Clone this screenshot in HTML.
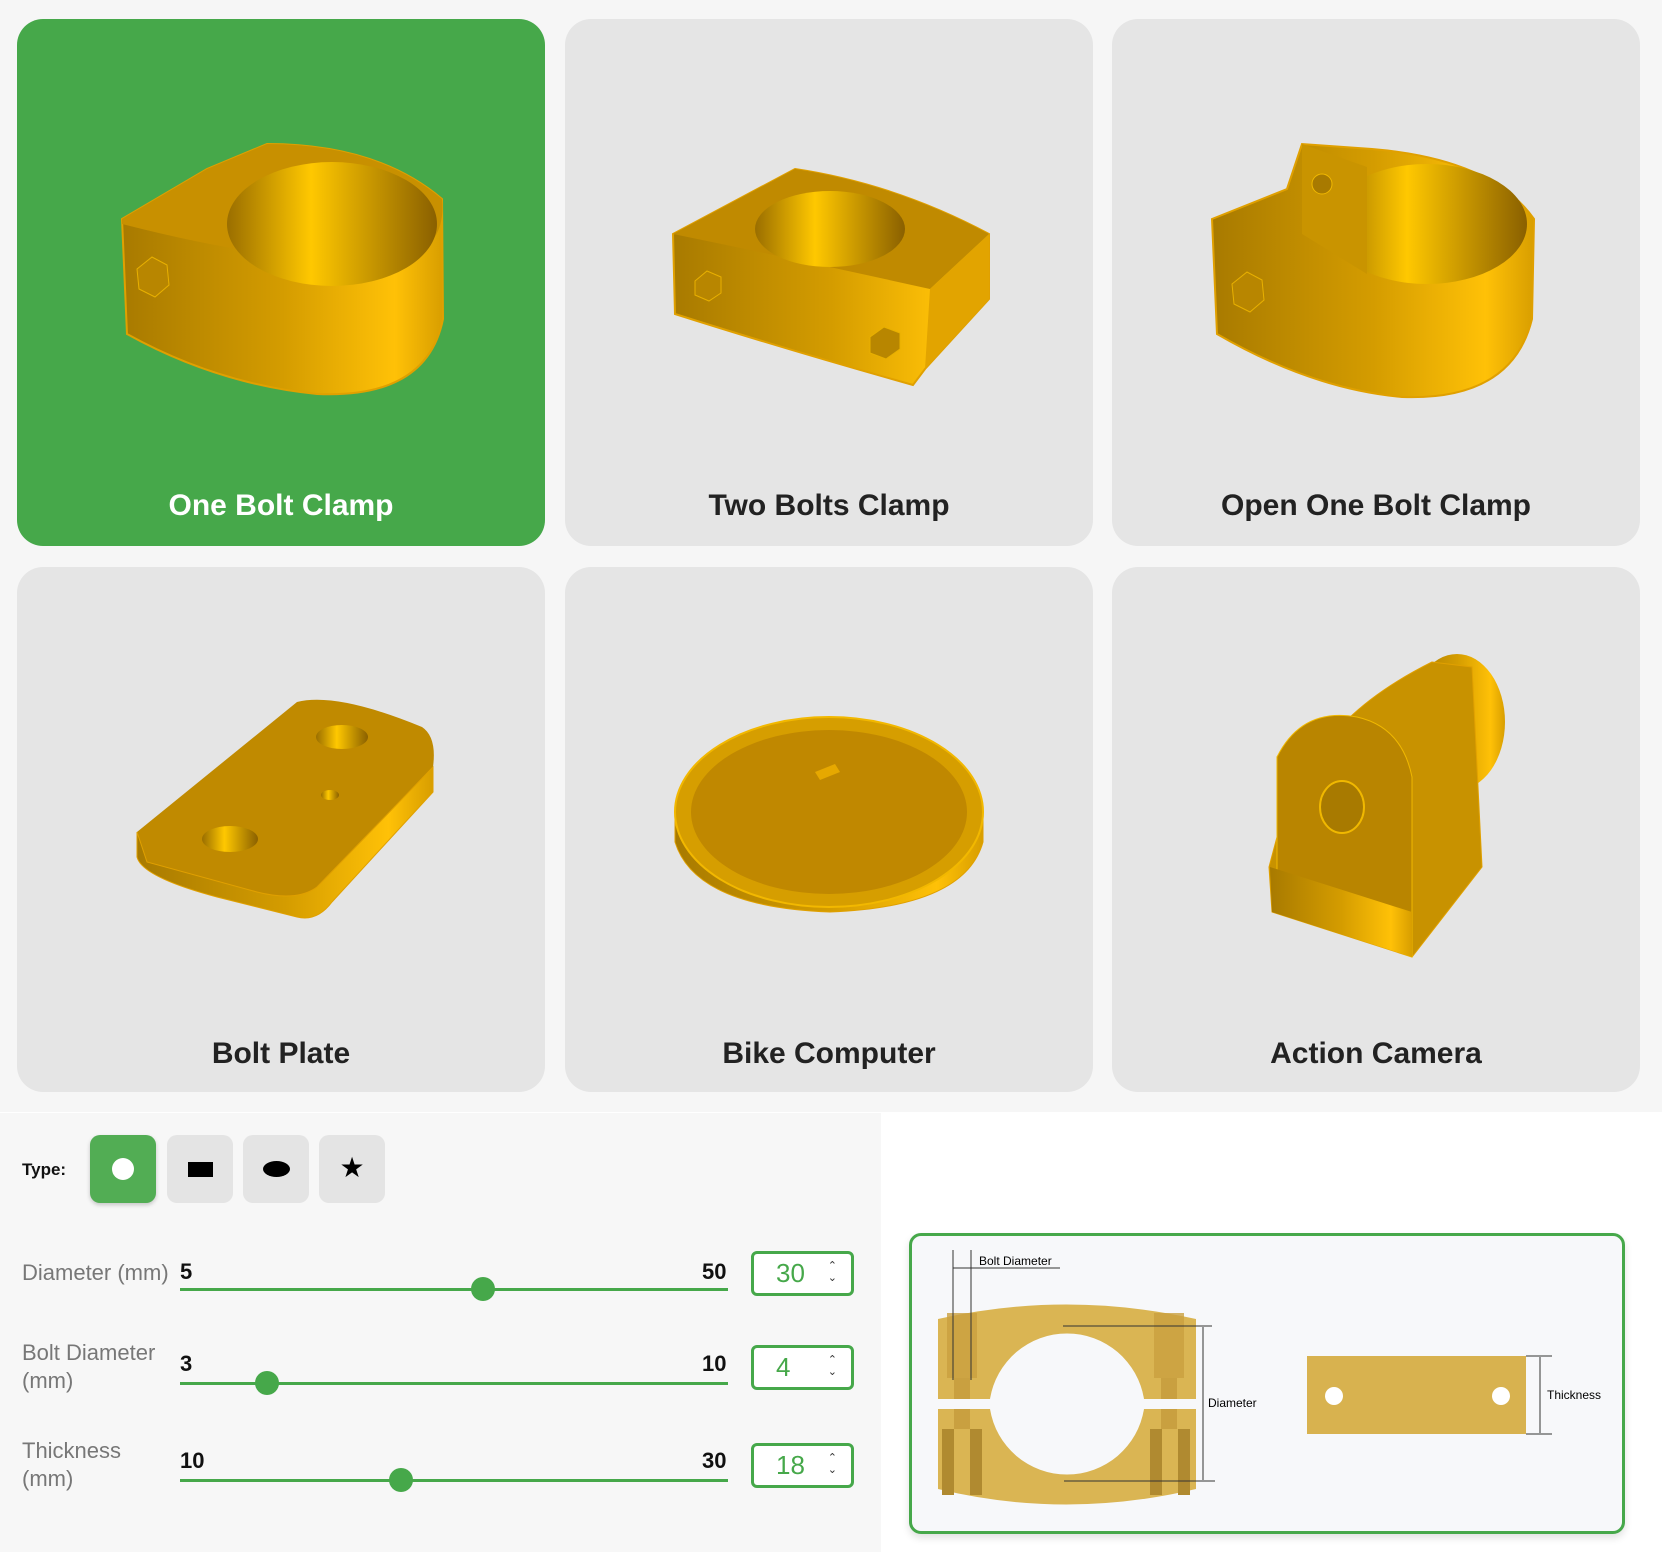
<!DOCTYPE html>
<html><head><meta charset="utf-8"><style>
*{margin:0;padding:0;box-sizing:border-box}
body{width:1662px;height:1552px;background:#fff;font-family:"Liberation Sans",sans-serif;position:relative;overflow:hidden}
.band{position:absolute;left:0;top:0;width:1662px;height:1112px;background:#f6f6f6}
.card{position:absolute;width:528px;background:#e5e5e5;border-radius:26px;overflow:hidden}
.card.sel{background:#46a84a}
.card svg{position:absolute;left:0;top:0}
.card .t{position:absolute;left:0;width:100%;text-align:center;font-weight:bold;font-size:30px;color:#222}
.card.sel .t{color:#fff}
.left{position:absolute;left:0;top:1113px;width:881px;height:439px;background:#f7f7f7}
.lbl{position:absolute;font-size:22px;color:#777;line-height:28px}
.b{position:absolute;font-weight:bold;font-size:22px;color:#111}
.btn{position:absolute;top:1135px;width:66px;height:68px;border-radius:10px;background:#e4e4e4}
.track{position:absolute;left:180px;width:548px;height:3px;background:#46a84a}
.thumb{position:absolute;width:24px;height:24px;border-radius:50%;background:#46a84a}
.num{position:absolute;left:751px;width:103px;height:45px;border:3px solid #46a84a;border-radius:6px;background:#fff;color:#46a84a;font-size:26px;line-height:39px;padding-left:22px}
.num span{position:absolute;right:14px;top:6px;font-size:11px;color:#333;line-height:12px;text-align:center;border-radius:4px}
.diag{position:absolute;left:909px;top:1233px;width:716px;height:301px;background:#f7f8fa;border:3px solid #46a84a;border-radius:12px;box-shadow:0 4px 8px rgba(0,0,0,.12)}
</style></head><body>
<div class="band"></div>
<svg width="0" height="0" style="position:absolute"><defs>
<linearGradient id="g" x1="0" x2="1"><stop offset="0" stop-color="#a87a00"/><stop offset=".5" stop-color="#d49c00"/><stop offset=".85" stop-color="#ffc107"/><stop offset="1" stop-color="#d89e00"/></linearGradient>
<linearGradient id="h" x1="0" x2="1"><stop offset="0" stop-color="#9a6e00"/><stop offset=".4" stop-color="#ffc800"/><stop offset="1" stop-color="#8a6000"/></linearGradient>
</defs></svg>

<div class="card sel" style="left:17px;top:19px;height:527px">
<svg width="528" height="527"><path d="M105 200 L190 150 L250 125 Q360 125 425 180 L426 300 Q410 380 300 375 Q200 365 110 315 Z" fill="url(#g)" stroke="#e0a000" stroke-width="2"/>
<path d="M105 200 L190 150 L250 125 Q360 125 425 180 Q430 230 380 240 Q280 250 105 205Z" fill="#c89000"/>
<ellipse cx="315" cy="205" rx="105" ry="62" fill="url(#h)"/>
<path d="M120 250 l15 -12 l15 8 l2 20 l-14 12 l-16 -8z" fill="#b88600" stroke="#e8b000"/></svg>
<div class="t" style="top:470px">One Bolt Clamp</div></div>

<div class="card" style="left:565px;top:19px;height:527px">
<svg width="528" height="527"><path d="M108 215 L230 150 Q330 165 424 215 L424 280 L360 350 L348 366 Q220 330 110 295Z" fill="url(#g)" stroke="#e0a000" stroke-width="2"/>
<path d="M108 215 L230 150 Q330 165 424 215 L365 270 Q230 240 108 215Z" fill="#c08a00"/>
<ellipse cx="265" cy="210" rx="75" ry="38" fill="url(#h)"/>
<path d="M365 270 L424 215 L424 280 L360 350Z" fill="#e2a400"/>
<path d="M130 262 l12 -10 l14 6 l0 16 l-12 8 l-14 -6z" fill="#b88600" stroke="#e8b000"/>
<path d="M305 318 l14 -10 l16 6 l0 16 l-14 10 l-16 -6z" fill="#b88600" stroke="#e8b000"/></svg>
<div class="t" style="top:470px">Two Bolts Clamp</div></div>

<div class="card" style="left:1112px;top:19px;height:527px">
<svg width="528" height="527"><path d="M100 200 L175 170 L190 125 L260 130 Q380 140 422 200 L420 300 Q400 382 290 378 Q200 370 105 315 Z" fill="url(#g)" stroke="#e0a000" stroke-width="2"/>
<ellipse cx="315" cy="205" rx="100" ry="60" fill="url(#h)"/>
<path d="M190 125 L255 148 L255 255 L190 215Z" fill="#c99400"/>
<circle cx="210" cy="165" r="10" fill="#a87a00" stroke="#f0b800"/>
<path d="M120 265 l15 -12 l15 8 l2 20 l-14 12 l-16 -8z" fill="#b88600" stroke="#e8b000"/></svg>
<div class="t" style="top:470px">Open One Bolt Clamp</div></div>

<div class="card" style="left:17px;top:567px;height:525px">
<svg width="528" height="525"><path d="M120 265 L280 135 Q320 125 405 160 Q420 170 416 200 L300 320 Q280 335 240 325 L130 295 Q118 285 120 265Z" fill="#c08a00"/>
<path d="M120 265 L120 290 Q125 310 200 330 L280 350 Q300 355 315 335 L416 225 L416 200 L300 320 Q280 335 240 325 L130 295Z" fill="url(#g)" stroke="#e0a000"/>
<ellipse cx="325" cy="170" rx="26" ry="12" fill="url(#h)"/><ellipse cx="213" cy="272" rx="28" ry="13" fill="url(#h)"/><ellipse cx="313" cy="228" rx="9" ry="5" fill="url(#h)"/></svg>
<div class="t" style="top:470px">Bolt Plate</div></div>

<div class="card" style="left:565px;top:567px;height:525px">
<svg width="528" height="525"><path d="M110 245 L110 275 Q130 340 265 345 Q400 340 418 275 L418 245Z" fill="url(#g)" stroke="#e0a000"/>
<ellipse cx="264" cy="245" rx="154" ry="95" fill="#d69e00" stroke="#f2b800" stroke-width="2"/>
<ellipse cx="264" cy="245" rx="138" ry="82" fill="#c08800"/>
<path d="M250 205 l20 -8 l5 8 l-20 8z" fill="#e6a800"/></svg>
<div class="t" style="top:470px">Bike Computer</div></div>

<div class="card" style="left:1112px;top:567px;height:525px">
<svg width="528" height="525"><ellipse cx="345" cy="155" rx="48" ry="68" fill="url(#g)"/>
<path d="M200 200 Q230 140 320 95 L360 100 L370 300 L300 390 L160 345 L157 300 L165 270 L165 190Z" fill="#c89200" stroke="#e0a000"/>
<path d="M165 190 Q190 140 245 150 Q290 160 300 210 L300 390 L165 340Z" fill="#b98500" stroke="#f0b800"/>
<path d="M158 300 L300 345 L300 390 L160 345Z" fill="url(#g)"/>
<ellipse cx="230" cy="240" rx="22" ry="26" fill="#a87a00" stroke="#f0b800" stroke-width="2"/></svg>
<div class="t" style="top:470px">Action Camera</div></div>

<div class="left"></div>
<div class="b" style="left:22px;top:1160px;font-size:17px">Type:</div>
<div class="btn" style="left:90px;background:#52ad54;box-shadow:0 2px 4px rgba(0,0,0,.2)"><div style="position:absolute;left:22px;top:23px;width:22px;height:22px;border-radius:50%;background:#fff"></div></div>
<div class="btn" style="left:167px"><div style="position:absolute;left:21px;top:27px;width:25px;height:15px;background:#000"></div></div>
<div class="btn" style="left:243px"><div style="position:absolute;left:20px;top:26px;width:27px;height:16px;border-radius:50%;background:#000"></div></div>
<div class="btn" style="left:319px"><div style="position:absolute;left:0;width:66px;top:18px;text-align:center;font-size:28px;line-height:30px">★</div></div>

<div class="lbl" style="left:22px;top:1259px">Diameter (mm)</div>
<div class="b" style="left:180px;top:1259px">5</div><div class="b" style="left:702px;top:1259px">50</div>
<div class="track" style="top:1288px"></div><div class="thumb" style="left:471px;top:1277px"></div>
<div class="num" style="top:1251px">30<span>⌃<br>⌄</span></div>

<div class="lbl" style="left:22px;top:1339px">Bolt Diameter<br>(mm)</div>
<div class="b" style="left:180px;top:1351px">3</div><div class="b" style="left:702px;top:1351px">10</div>
<div class="track" style="top:1382px"></div><div class="thumb" style="left:255px;top:1371px"></div>
<div class="num" style="top:1345px">4<span>⌃<br>⌄</span></div>

<div class="lbl" style="left:22px;top:1437px">Thickness<br>(mm)</div>
<div class="b" style="left:180px;top:1448px">10</div><div class="b" style="left:702px;top:1448px">30</div>
<div class="track" style="top:1479px"></div><div class="thumb" style="left:389px;top:1468px"></div>
<div class="num" style="top:1443px">18<span>⌃<br>⌄</span></div>

<div class="diag"><svg width="710" height="295" viewBox="912 1236 710 295" style="position:absolute;left:0;top:0">
<path d="M938 1319 Q1066 1290 1196 1319 L1196 1399 L1144 1399 A78 78 0 0 0 990 1399 L938 1399Z" fill="#dab553"/>
<path d="M938 1409 L990 1409 A78 78 0 0 0 1144 1409 L1196 1409 L1196 1489 Q1066 1520 938 1489Z" fill="#dab553"/>
<rect x="947" y="1313" width="30" height="65" fill="#c9a040" opacity=".8"/><rect x="1154" y="1313" width="30" height="65" fill="#c9a040" opacity=".8"/>
<rect x="954" y="1378" width="16" height="21" fill="#c9a040"/><rect x="1161" y="1378" width="16" height="21" fill="#c9a040"/>
<rect x="954" y="1409" width="16" height="20" fill="#c9a040"/><rect x="1161" y="1409" width="16" height="20" fill="#c9a040"/>
<rect x="942" y="1429" width="12" height="66" fill="#b08a30"/><rect x="970" y="1429" width="12" height="66" fill="#b08a30"/>
<rect x="1150" y="1429" width="12" height="66" fill="#b08a30"/><rect x="1178" y="1429" width="12" height="66" fill="#b08a30"/>
<g stroke="#333" stroke-width="1" fill="none"><path d="M953 1250 V1380 M971 1250 V1380 M953 1268 H1060 M1063 1326 H1212 M1064 1481 H1215 M1203 1327 V1480 M1526 1356 H1552 M1526 1434 H1552 M1540 1357 V1433"/></g>
<rect x="1307" y="1356" width="219" height="78" fill="#d8b24f"/>
<circle cx="1334" cy="1396" r="9" fill="#fff"/><circle cx="1501" cy="1396" r="9" fill="#fff"/>
<text x="979" y="1265" font-family="Liberation Sans" font-size="12">Bolt Diameter</text>
<text x="1208" y="1407" font-family="Liberation Sans" font-size="12">Diameter</text>
<text x="1547" y="1399" font-family="Liberation Sans" font-size="12">Thickness</text>
</svg></div>
</body></html>
